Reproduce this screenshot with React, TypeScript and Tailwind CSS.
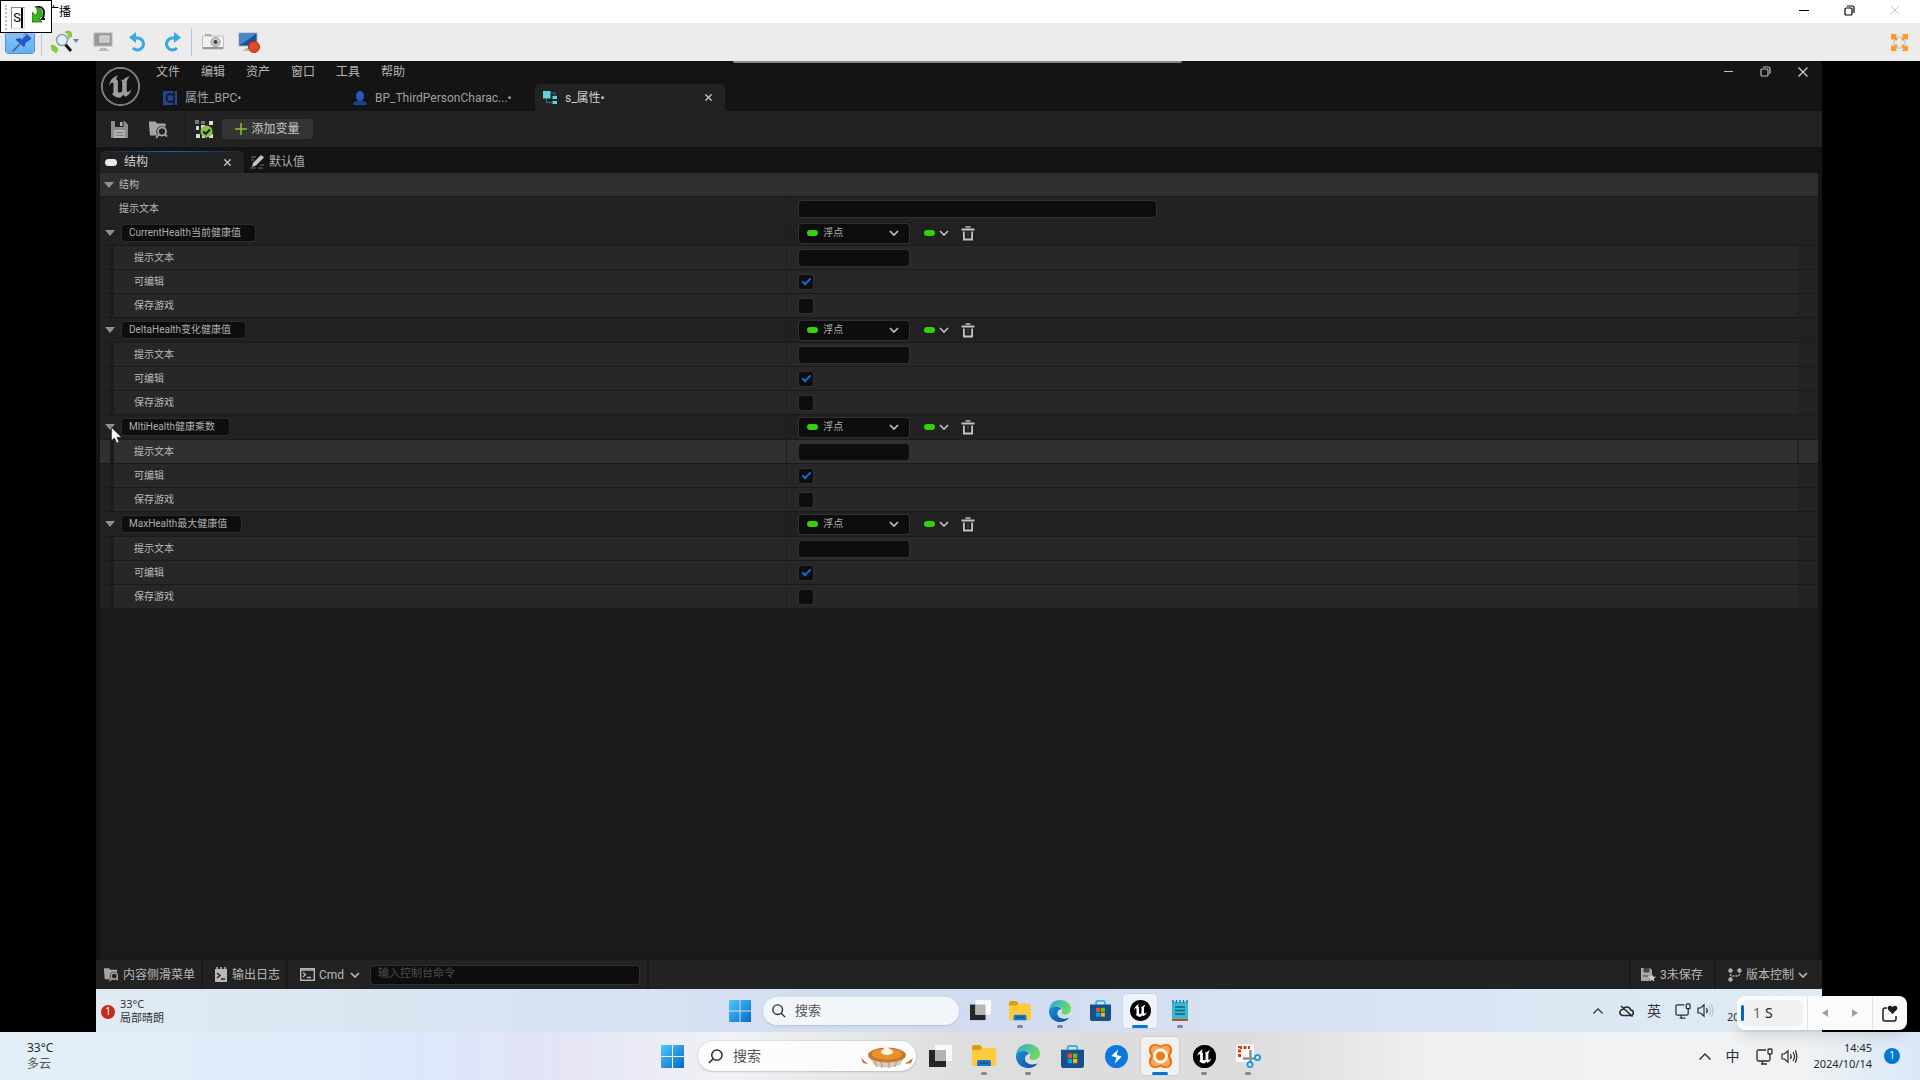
import React, { useState } from 'react';
import { SiUnrealengine } from 'react-icons/si';

interface StructMember {
  id: string;
  name: string;
  tooltip: string;
  editable: boolean;
  saveGame: boolean;
}

const initialMembers: StructMember[] = [
  { id: 'current', name: 'CurrentHealth当前健康值', tooltip: '', editable: true, saveGame: false },
  { id: 'delta', name: 'DeltaHealth变化健康值', tooltip: '', editable: true, saveGame: false },
  { id: 'mlti', name: 'MltiHealth健康乘数', tooltip: '', editable: true, saveGame: false },
  { id: 'max', name: 'MaxHealth最大健康值', tooltip: '', editable: true, saveGame: false },
];

const menus = ['文件', '编辑', '资产', '窗口', '工具', '帮助'];

/* ---------- small icons ---------- */

const Chevron = ({ className = '' }: { className?: string }) => (
  <svg className={className} width="10" height="6" viewBox="0 0 10 6" fill="none" stroke="currentColor" strokeWidth="1.7">
    <path d="M1 1l4 4 4-4" />
  </svg>
);

const Triangle = () => (
  <svg width="10" height="6" viewBox="0 0 10 6" fill="#8f8f8f">
    <path d="M0 0h10L5 6z" />
  </svg>
);

const Pill = () => <span className="block h-[6px] w-[11px] rounded-full bg-[#36d00c]" />;

const Cross = ({ size = 7, color = '#c0c0c0', width = 1.4 }: { size?: number; color?: string; width?: number }) => (
  <svg width={size} height={size} viewBox="0 0 10 10" stroke={color} strokeWidth={(width * 10) / size}>
    <path d="M.5.5l9 9M9.5.5l-9 9" />
  </svg>
);

const Restore = ({ color }: { color: string }) => (
  <svg width="11" height="11" viewBox="0 0 11 11" fill="none" stroke={color} strokeWidth="1.2">
    <rect x="1" y="3" width="7" height="7" rx="1" />
    <path d="M3 1h5.500q1.500 0 1.500 1.500V8" />
  </svg>
);

const TrashIcon = () => (
  <svg width="14" height="15" viewBox="0 0 14 15" fill="none" stroke="#c4c4c4" strokeWidth="1.8">
    <path d="M.5 3.500h13M2.900 5.500v8h8.200v-8" />
    <path d="M4.500 1h5" strokeWidth="1.400" />
    <path d="M7 5.500v5" stroke="#555" strokeWidth="1" />
  </svg>
);

const FolderSearch = ({ size }: { size: number }) => (
  <svg width={size} height={size} viewBox="0 0 19 19">
    <path d="M0 3V1.500h6.500l1.500 2h8.500V7.500A5 5 0 0 0 9 15.500H1L0 5z" fill="#a5a5a5" />
    <circle cx="13" cy="11.500" r="4" fill="#222" stroke="#a5a5a5" strokeWidth="1.800" />
    <path d="M10.300 14.300L7 17.800M16 14.500l2 2" stroke="#a5a5a5" strokeWidth="1.800" />
  </svg>
);

const SaveIcon = () => (
  <svg width="17" height="17" viewBox="0 0 17 17">
    <path d="M0 0h13.500L17 3.500V17H0z" fill="#8d8d8d" />
    <rect x="4" y="0" width="8.500" height="6" fill="#222" />
    <rect x="9" y="1" width="2.500" height="4" fill="#b0b0b0" />
    <rect x="3" y="9" width="11" height="8" fill="#b5b5b5" />
    <path d="M4.500 11.500h8M4.500 14.200h8" stroke="#777" />
  </svg>
);

const CompileIcon = () => (
  <svg width="20" height="19" viewBox="0 0 20 19">
    <g fill="#d8d8d8">
      <rect x="0" y="0" width="4" height="4" fill="#777" />
      <rect x="6" y="1" width="4" height="3" fill="#777" />
      <rect x="14" y="1" width="4" height="4" />
      <rect x="1" y="6" width="3" height="4" />
      <rect x="6" y="5" width="4" height="4" />
      <rect x="1" y="14" width="4" height="4" />
      <rect x="7" y="15" width="3" height="3" />
      <rect x="14" y="14" width="4" height="4" />
    </g>
    <circle cx="11.500" cy="11.500" r="6" fill="#86c440" />
    <path d="M8.300 11.500l2.500 2.500 4.200-4.500" fill="none" stroke="#161616" strokeWidth="1.900" />
  </svg>
);

/* ---------- remote viewer toolbar ---------- */

const PinIcon = () => (
  <svg width="28" height="21" viewBox="0 0 28 21">
    <path d="M7 19l7-7" stroke="#555c68" strokeWidth="1.600" />
    <path d="M10 7.500l8 7 1-4 6-4-5.500-5-4 5z" fill="#1c5fd4" stroke="#164aa8" />
    <path d="M15 7l5-5" stroke="#8fc0f6" strokeWidth="1.500" />
  </svg>
);

const ZoomIcon = () => (
  <svg width="28" height="24" viewBox="0 0 28 24">
    <path d="M14 14l6 7" stroke="#161616" strokeWidth="3" />
    <circle cx="11" cy="10" r="5.500" fill="#dff0ff" stroke="#8a9cb8" strokeWidth="1.500" />
    <path d="M14 2q3-2 6 0l1 5-2-1-1 3-1-5zM0 15l4 1 3 3-2 4-4-3z" fill="#7fd138" stroke="#58a81e" strokeWidth=".5" />
    <path d="M22 9h6l-3 4z" fill="#6a7dc0" />
  </svg>
);

const ScreenIcon = ({ recording }: { recording?: boolean }) => (
  <svg width="22" height="21" viewBox="0 0 22 21">
    <rect x="1" y="1" width="18" height="13" fill={recording ? '#1d4e96' : '#999'} stroke={recording ? '#a8b4c4' : '#b5b5b5'} />
    {recording ? <path d="M2 2h16L4 12H2z" fill="#4587cc" /> : <rect x="7" y="4" width="9" height="6" fill="#c8c8c8" stroke="#e4e4e4" />}
    <path d="M7 16h7v2H7zM5 18h11v1H5z" fill="#bcbcbc" />
    {recording && <circle cx="16" cy="15" r="5.500" fill="#e04a20" stroke="#b5300f" />}
  </svg>
);

const TurnIcon = ({ right }: { right?: boolean }) => (
  <svg className={right ? '-scale-x-100' : ''} width="18" height="20" viewBox="0 0 18 20" fill="none">
    <path d="M5 6h4a6 6 0 1 1-5 10" stroke="#38a9e2" strokeWidth="3" />
    <path d="M0 5.500L7 0v11z" fill="#38a9e2" />
  </svg>
);

const CameraIcon = () => (
  <svg width="22" height="16" viewBox="0 0 22 16">
    <rect x=".5" y="2" width="21" height="13" rx="1" fill="#f1f1f1" stroke="#bfbfbf" />
    <path d="M1 13h20v2H1z" fill="#999" />
    <rect x="3" y="0" width="6" height="2" fill="#aaa" />
    <circle cx="13.500" cy="8" r="4.500" fill="#c9c9c9" stroke="#999" />
    <circle cx="13.500" cy="8" r="2" fill="#3d4454" />
  </svg>
);

const ExpandIcon = () => (
  <svg width="17" height="17" viewBox="0 0 17 17">
    <rect x="3" y="3" width="11" height="11" fill="none" stroke="#a9d5ee" strokeWidth="1.500" />
    <path d="M0 0h6L4.500 2.500 7 5 5 7 2.500 4.500 0 6zM17 0v6l-2.500-1.500L12 7l-2-2 2.500-2.500L11 0zM0 17v-6l2.500 1.500L5 10l2 2-2.500 2.500L6 17zM17 17h-6l1.500-2.500L10 12l2-2 2.500 2.500L17 11z" fill="#ff9a1a" />
  </svg>
);

/* ---------- taskbar icons ---------- */

const WindowsLogo = ({ size }: { size: number }) => (
  <svg width={size} height={size} viewBox="0 0 23 23">
    <defs>
      <linearGradient id="win" x1="0" y1="0" x2="1" y2="1">
        <stop offset="0" stopColor="#4fc9fb" />
        <stop offset="1" stopColor="#0668c8" />
      </linearGradient>
    </defs>
    <path d="M0 0h11v11H0zM12 0h11v11H12zM0 12h11v11H0zM12 12h11v11H12z" fill="url(#win)" />
  </svg>
);

const SearchGlass = ({ flip, size }: { flip?: boolean; size: number }) => (
  <svg className={flip ? 'shrink-0 -scale-x-100' : 'shrink-0'} width={size} height={size} viewBox="0 0 16 16" fill="none" stroke="#2a2a2a" strokeWidth="1.600">
    <circle cx="6.500" cy="6.500" r="5.500" />
    <path d="M10.500 10.500l4.500 4.500" />
  </svg>
);

const TaskView = ({ size }: { size: number }) => (
  <svg width={size} height={size} viewBox="0 0 23 23">
    <rect x="0" y="5" width="17" height="17" fill="#262626" />
    <rect x="6" y="0" width="17" height="16" fill="#fafafa" />
    <rect x="6" y="5" width="11" height="11" fill="#b4b4b4" />
  </svg>
);

const Explorer = ({ size }: { size: number }) => (
  <svg width={size} height={size} viewBox="0 0 24 24">
    <path d="M0 3q0-2 2-2h6l2.500 3H20v5H0z" fill="#dc9c0c" />
    <path d="M0 7q0-1 1-1h7l2-2h13q1 0 1 1v16q0 1-1 1H1q-1 0-1-1z" fill="#fdcb3e" />
    <path d="M5 22v-4q0-2 2-2h10q2 0 2 2v4z" fill="#1b74c4" />
    <path d="M8 19h8" stroke="#0f4f94" strokeWidth="1.500" />
  </svg>
);

const Edge = ({ size }: { size: number }) => (
  <svg width={size} height={size} viewBox="0 0 24 24">
    <defs>
      <linearGradient id="edgeTop" x1="0" y1="0" x2="1" y2=".5">
        <stop offset="0" stopColor="#2aa6e6" />
        <stop offset="1" stopColor="#6edc5a" />
      </linearGradient>
      <linearGradient id="edgeLow" x1="0" y1="0" x2="1" y2="1">
        <stop offset="0" stopColor="#1c8fe0" />
        <stop offset="1" stopColor="#0c4a94" />
      </linearGradient>
    </defs>
    <path d="M0 12C0 5 5 0 12 0s12 4.500 12 9.500c0 4-3 6.500-6.500 6.500-3 0-4-1.200-4-2 0-.8 1-1.200 1-3C14.500 8.500 12 7 9 7 4 7 0 10 0 12z" fill="url(#edgeTop)" />
    <path d="M0 12c0-2.500 3.500-5 8-5 3 0 5 1.500 5.500 3C11 10 9 12 9 14.500c0 4 4 6 7.500 6 2.500 0 4.500-1 5.500-1.500C20 22 16.500 24 12 24 5 24 0 19 0 12z" fill="url(#edgeLow)" />
  </svg>
);

const Store = ({ size }: { size: number }) => (
  <svg width={size} height={size} viewBox="0 0 24 24">
    <path d="M7 6V3q0-2 2-2h6q2 0 2 2v3" fill="none" stroke="#36b2ee" strokeWidth="2" />
    <path d="M0 5h24v16q0 3-3 3H3q-3 0-3-3z" fill="#174f8c" />
    <path d="M7 9h4.500v4.500H7z" fill="#f25022" />
    <path d="M12.500 9H17v4.500h-4.500z" fill="#7fba00" />
    <path d="M7 14.500h4.500V19H7z" fill="#00a4ef" />
    <path d="M12.500 14.500H17V19h-4.500z" fill="#ffb900" />
  </svg>
);

const Thunder = () => (
  <svg width="23" height="23" viewBox="0 0 24 24">
    <circle cx="12" cy="12" r="12" fill="#0a78dc" />
    <path d="M14 4.500L6.500 11.500l5.500 1.500-2 6.500 7.500-7.500-5.500-1.500z" fill="#fff" />
  </svg>
);

const Unreal = ({ size }: { size: number }) => (
  <span className="relative flex rounded-full bg-black after:absolute after:inset-0 after:rounded-full after:border-2 after:border-black after:content-['']">
    <SiUnrealengine size={size} color="#fff" />
  </span>
);

const Notepad = () => (
  <svg width="18" height="22" viewBox="0 0 18 22">
    <rect x="1" y="2" width="16" height="17" fill="#38b8d4" />
    <path d="M2 0v3M5.500 0v3M9 0v3M12.500 0v3M16 0v3" stroke="#1b7b94" strokeWidth="1.500" />
    <path d="M4 7h10M4 10.500h10M4 14h10" stroke="#155f78" strokeWidth="1.500" />
    <path d="M1 19h16v2H1z" fill="#c0531a" />
  </svg>
);

const OrangeApp = () => (
  <svg width="25" height="24" viewBox="0 0 25 24">
    <path d="M7 0q3 0 5.500 1.500Q15 0 18 0q6 .5 6 6 0 3.500-2 6 2 2.500 2 6 0 5.500-6 6-3 0-5.500-1.500Q10 24 7 24q-6-.5-6-6 0-3.500 2-6-2-2.500-2-6 0-5.500 6-6z" fill="#ea6c0c" />
    <path d="M7 1.500q3 0 5.500 2 2.500-2 5.500-2 4.500.5 4 5-.5 3-2.500 5.500 2 2.500 2.500 5.500.5 4.500-4 5-3 0-5.500-2-2.500 2-5.500 2-4.500-.5-4-5Q3.500 14.500 5.500 12 3.500 9.500 3 6.500q-.5-4.500 4-5z" fill="#ffa552" />
    <circle cx="12.500" cy="12" r="6" fill="#f07a18" stroke="#fff" strokeWidth="2.800" />
  </svg>
);

const Snip = () => (
  <svg width="25" height="24" viewBox="0 0 25 24">
    <rect x="0" y="0" width="18" height="18" rx="2" fill="#fafafa" />
    <path d="M3.500 13V3.500H14" fill="none" stroke="#d63c12" strokeWidth="3" strokeDasharray="3 1.500" />
    <path d="M14.500 6v12M7 14.500h12" stroke="#8b8f96" strokeWidth="2.500" />
    <circle cx="14" cy="20.500" r="2.500" fill="#fff" stroke="#1e9ce0" strokeWidth="2" />
    <circle cx="21.500" cy="13.500" r="2.500" fill="#fff" stroke="#1e9ce0" strokeWidth="2" />
  </svg>
);

const Pie = () => (
  <svg className="shrink-0" width="52" height="26" viewBox="0 0 52 26">
    <path d="M0 15l7 6-5-1zM52 15l-8 6 6-1z" fill="#d4602a" />
    <path d="M8 13h36l-5 9q-13 5-26 0z" fill="#d9cdb8" />
    <path d="M13 16l3 8M20 17l1 8M28 17v8M36 16l-2 8" stroke="#aa9c84" strokeWidth="1" />
    <ellipse cx="26" cy="12" rx="19" ry="7.500" fill="#c67a2c" />
    <ellipse cx="26" cy="11" rx="15" ry="5.500" fill="#e8922e" />
    <path d="M20 10q0-3 3-4 0-4 3-6 0 4 3 6 3 1 3 4-6 4-12 0z" fill="#fdf3e2" />
  </svg>
);

const Network = ({ size }: { size: number }) => (
  <svg width={size} height={size} viewBox="0 0 17 17" fill="none" stroke="#2a2a2a" strokeWidth="1.300">
    <path d="M10 2H2.500Q1 2 1 3.500v8Q1 13 2.500 13h10q1.500 0 1.500-1.500V9M5 16h6M6.500 13v3M14 6v3" />
    <rect x="12" y="1" width="4" height="5" rx="1" />
  </svg>
);

const Speaker = ({ faint }: { faint?: boolean }) => (
  <svg width="17" height="15" viewBox="0 0 17 15" fill="none" stroke="#2a2a2a" strokeWidth="1.200">
    <path d="M1 5h2.500L7 1.800v11.400L3.500 10H1z" />
    <path d="M9.500 5q1.500 2.500 0 5" />
    <path d="M12 3q3 4.500 0 9M14.300 1.300q3 6.200 0 12.400" opacity={faint ? 0.2 : 1} />
  </svg>
);

const CaretUp = ({ size }: { size: number }) => (
  <svg width={size} height={size / 2 + 1} viewBox="0 0 12 7" fill="none" stroke="#2a2a2a" strokeWidth="1.400">
    <path d="M.5 6.500L6 1l5.500 5.500" />
  </svg>
);

/* ---------- struct editor rows ---------- */

const checkboxClass =
  "relative block size-[14px] appearance-none rounded-[2px] bg-[#0d0d0d] ring-1 ring-[#303030] checked:after:absolute checked:after:left-[5px] checked:after:top-[1px] checked:after:h-[9px] checked:after:w-[5px] checked:after:rotate-45 checked:after:border-b-2 checked:after:border-r-2 checked:after:border-[#0d6fd8] checked:after:content-['']";

const textboxClass = 'block h-4 rounded-[3px] bg-[#0d0d0d] px-2 text-[10px] text-[#c0c0c0] ring-1 ring-[#303030] outline-none';

const DetailRow = ({ id, label, hovered, children }: { id: string; label: string; hovered?: boolean; children: React.ReactNode }) => (
  <div className={`flex h-6 border-b border-[#1a1a1a] ${hovered ? 'bg-[#303030]' : 'bg-[#222222]'}`}>
    <div className="flex w-2/5 border-r border-[#202020]">
      <div className="ml-[10px] w-1 bg-[#1c1c1c]" />
      <label htmlFor={id} className={`flex flex-1 items-center pl-5 ${hovered ? 'bg-[#303030]' : 'bg-[#272727]'}`}>
        {label}
      </label>
    </div>
    <div className={`flex flex-1 items-center pl-3 ${hovered ? 'bg-[#303030]' : 'bg-[#272727]'}`}>{children}</div>
    <div className={`w-[21px] ${hovered ? 'border-l-2 border-[#242424]' : ''}`} />
  </div>
);

interface MemberProps {
  member: StructMember;
  hovered?: boolean;
  onChange: (patch: Partial<StructMember>) => void;
}

const MemberGroup: React.FC<MemberProps> = ({ member, hovered, onChange }) => (
  <section>
    <div className="flex h-[25px] border-b border-[#1a1a1a] bg-[#212121]">
      <div className="flex w-2/5 items-center gap-[7px] border-r border-[#1d1d1d] pl-[5px]">
        <button aria-label="展开" className="relative">
          <Triangle />
          {hovered && (
            <svg className="absolute left-[6px] top-[3px] z-10" width="12" height="17" viewBox="0 0 12 17">
              <path d="M.5.5v13l3-2.500 2.300 5 2.200-1-2.200-4.700h4.700z" fill="#fff" stroke="#222" strokeWidth=".6" />
            </svg>
          )}
        </button>
        <input
          aria-label="名称"
          value={member.name}
          onChange={(e) => onChange({ name: e.target.value })}
          className="field-sizing-content h-4 rounded-[3px] bg-[#0d0d0d] pb-[3px] pl-[7px] pr-[14px] text-[10px] text-[#adadad] ring-1 ring-[#2b2b2b] outline-none"
        />
      </div>
      <div className="flex flex-1 items-center pl-3">
        <div className="relative flex items-center">
          <select aria-label="类型" className="h-[19px] w-[110px] appearance-none rounded-[3px] bg-[#0d0d0d] pb-px pl-6 text-[10px] text-[#adadad] ring-1 ring-[#303030] outline-none">
            <option>浮点</option>
          </select>
          <span className="pointer-events-none absolute left-2">
            <Pill />
          </span>
          <Chevron className="pointer-events-none absolute right-[10px] text-[#c0c0c0]" />
        </div>
        <button aria-label="容器类型" className="ml-[15px] flex items-center gap-1 text-[#c0c0c0]">
          <Pill />
          <Chevron />
        </button>
        <button aria-label="删除" className="ml-3">
          <TrashIcon />
        </button>
      </div>
    </div>
    <DetailRow id={`${member.id}-tip`} label="提示文本" hovered={hovered}>
      <input id={`${member.id}-tip`} value={member.tooltip} onChange={(e) => onChange({ tooltip: e.target.value })} className={`${textboxClass} w-[110px]`} />
    </DetailRow>
    <DetailRow id={`${member.id}-edit`} label="可编辑">
      <input id={`${member.id}-edit`} type="checkbox" checked={member.editable} onChange={(e) => onChange({ editable: e.target.checked })} className={checkboxClass} />
    </DetailRow>
    <DetailRow id={`${member.id}-save`} label="保存游戏">
      <input id={`${member.id}-save`} type="checkbox" checked={member.saveGame} onChange={(e) => onChange({ saveGame: e.target.checked })} className={checkboxClass} />
    </DetailRow>
  </section>
);

/* ---------- taskbar cell ---------- */

interface TaskCellProps {
  label: string;
  small?: boolean;
  active?: boolean;
  running?: boolean;
  children: React.ReactNode;
}

const TaskCell: React.FC<TaskCellProps> = ({ label, small, active, running, children }) => (
  <div className={`flex justify-center ${small ? 'w-10' : 'w-11'}`}>
    <button
      aria-label={label}
      className={`relative flex items-center justify-center rounded-[4px] ${small ? 'h-[34px] w-[34px]' : 'h-[38px] w-[38px]'} ${active ? 'bg-white/60 ring-1 ring-black/5' : ''}`}
    >
      {children}
      {active && <span className="absolute bottom-0 h-[3px] w-4 rounded-full bg-[#0a74d0]" />}
      {running && <span className="absolute bottom-0 h-[3px] w-[6px] rounded-full bg-[#858585]" />}
    </button>
  </div>
);

const App: React.FC = () => {
  const [members, setMembers] = useState<StructMember[]>(initialMembers);
  const [tip, setTip] = useState('');

  const update = (id: string, patch: Partial<StructMember>) =>
    setMembers((list) => list.map((m) => (m.id === id ? { ...m, ...patch } : m)));

  return (
    <div className="relative flex min-h-screen flex-col bg-black font-['Roboto','Noto_Sans_CJK_SC',sans-serif] text-xs">
      {/* viewer title bar */}
      <header className="flex h-[23px] items-center justify-between bg-white pl-[47px] pr-5 text-black">
        <span>广播</span>
        <div className="flex items-center gap-[35px] pb-[3px]">
          <button aria-label="最小化" className="h-px w-[10px] bg-black" />
          <button aria-label="还原"><Restore color="#000" /></button>
          <button aria-label="关闭"><Cross size={10} color="#c8c8c8" width={1} /></button>
        </div>
      </header>

      {/* viewer toolbar */}
      <div className="flex h-[38px] items-center bg-[#ececec] pl-[6px] pr-3">
        <button aria-label="固定" className="rounded-[3px] bg-gradient-to-b from-[#8cc0f2] to-[#5fb2f4] ring-1 ring-[#4c98dc]"><PinIcon /></button>
        <div className="mx-[7px] h-7 w-px bg-[#b8c4e6]" />
        <button aria-label="缩放" className="ml-[2px]"><ZoomIcon /></button>
        <button aria-label="屏幕" className="ml-[14px]"><ScreenIcon /></button>
        <button aria-label="撤销" className="ml-[14px]"><TurnIcon /></button>
        <button aria-label="重做" className="ml-4"><TurnIcon right /></button>
        <div className="mx-[10px] h-7 w-px bg-[#b8c4e6]" />
        <button aria-label="截图"><CameraIcon /></button>
        <button aria-label="录制" className="ml-[14px]"><ScreenIcon recording /></button>
        <button aria-label="全屏" className="ml-auto"><ExpandIcon /></button>
      </div>

      {/* remote desktop */}
      <main className="relative mr-[98px] ml-24 flex flex-1 flex-col bg-[#141414] text-[#b4b4b4]">
        <div className="absolute left-[637px] top-0 h-[2px] w-[449px] rounded-b bg-[#8c8c8c]" />

        <div className="flex h-[50px]">
          <div className="flex w-[58px] items-center pl-[6px]">
            <span className="rounded-full ring-1 ring-[#8a8a8a]">
              <SiUnrealengine size={37} color="#9d9d9d" />
            </span>
          </div>
          <div className="flex flex-1 flex-col">
            <nav className="flex h-[23px] items-center gap-[21px] pb-[2px] pl-[2px]">
              {menus.map((m) => (
                <button key={m}>{m}</button>
              ))}
              <div className="ml-auto flex items-center gap-[27px] pr-[14px]">
                <button aria-label="最小化" className="h-px w-[9px] bg-[#c0c0c0]" />
                <button aria-label="还原"><Restore color="#b8b8b8" /></button>
                <button aria-label="关闭"><Cross size={10} color="#c8c8c8" width={1.4} /></button>
              </div>
            </nav>
            <div className="flex h-[27px] pl-px">
              <button className="flex w-[190px] items-center gap-2 pl-2 text-[#a0a0a0]">
                <svg width="14" height="14" viewBox="0 0 14 14">
                  <path d="M0 0h14v14H0z" fill="#23468c" />
                  <path d="M10.500 4.500Q9 3 7 3 3.500 3.500 3.500 7T7 11q2 0 3.500-1.500M11 0v14" fill="none" stroke="#131a2b" strokeWidth="1.800" />
                </svg>
                属性_BPC•
              </button>
              <button className="flex w-[190px] items-center gap-2 pl-2 text-[#a0a0a0]">
                <svg width="14" height="14" viewBox="0 0 14 14">
                  <path d="M0 14q0-4 5-4.500h4q5 .5 5 4.500z" fill="#1d418c" />
                  <ellipse cx="7" cy="5" rx="4" ry="5" fill="#2a58bc" />
                </svg>
                <span>BP_ThirdPersonCharac...•</span>
              </button>
              <div className="flex w-[190px] items-center rounded-t-[5px] bg-[#222222] pl-2 pr-[13px] text-[#d0d0d0]">
                <svg className="mr-2" width="14" height="13" viewBox="0 0 14 13">
                  <rect width="7.500" height="7.500" fill="#5fd3e0" />
                  <rect x="9.500" y="5" width="4.500" height="3" fill="#5fd3e0" />
                  <rect x="9.500" y="10" width="4.500" height="3" fill="#5fd3e0" />
                  <path d="M3.500 8v3.500h6M8 2h4v3" fill="none" stroke="#2f7d88" />
                </svg>
                <span>s_属性•</span>
                <button aria-label="关闭" className="ml-auto"><Cross /></button>
              </div>
            </div>
          </div>
        </div>

        {/* asset toolbar */}
        <div className="flex h-9 items-center bg-[#222222] pl-[15px]">
          <button aria-label="保存"><SaveIcon /></button>
          <button aria-label="浏览" className="ml-[21px]"><FolderSearch size={19} /></button>
          <div className="ml-4 h-full w-px bg-[#1c1c1c]" />
          <button aria-label="编译" className="ml-[10px]"><CompileIcon /></button>
          <button className="ml-[7px] flex h-5 w-[91px] items-center justify-center gap-1 rounded-[3px] bg-[#343434] text-[#c8c8c8]">
            <svg width="12" height="12" viewBox="0 0 12 12" stroke="#84c03c" strokeWidth="1.500">
              <path d="M6 0v12M0 6h12" />
            </svg>
            添加变量
          </button>
        </div>

        {/* panel tabs */}
        <div className="flex h-[26px] items-end pl-1">
          <div className="relative flex h-[22px] w-36 items-center overflow-hidden rounded-t-[5px] bg-[#222222] pl-[5px] pr-[13px] text-[#cfcfcf]">
            <div className="absolute inset-x-0 top-0 h-px bg-gradient-to-r from-transparent via-[#1266c8] to-transparent" />
            <span className="mr-[7px] h-[7px] w-3 rounded-full bg-[#e8e8e8]" />
            结构
            <button aria-label="关闭" className="ml-auto"><Cross /></button>
          </div>
          <button className="flex h-[22px] items-center gap-[5px] pl-[6px] text-[#adadad]">
            <svg width="14" height="14" viewBox="0 0 14 14">
              <path d="M2 12l1-4 8-8 3 2.500-8 8z" fill="#c4c4c4" />
              <path d="M1 2h5M1 5h3M0 13h6M8 13h5M10 10h4" stroke="#6e6e6e" />
            </svg>
            默认值
          </button>
        </div>

        {/* struct details */}
        <div className="mx-1 flex flex-1 flex-col bg-[#1a1a1a] text-[10px] text-[#bababa]">
          <div className="flex h-6 items-center gap-[5px] border-b border-[#1a1a1a] bg-[#2f2f2f] pl-1">
            <button aria-label="折叠"><Triangle /></button>
            结构
          </div>
          <div className="flex h-6 bg-[#222222]">
            <label htmlFor="struct-tip" className="flex w-2/5 items-center border-r border-[#1d1d1d] pl-[19px]">提示文本</label>
            <div className="flex flex-1 items-center pl-3">
              <input id="struct-tip" value={tip} onChange={(e) => setTip(e.target.value)} className={`${textboxClass} w-[357px]`} />
            </div>
          </div>
          {members.map((m) => (
            <MemberGroup key={m.id} member={m} hovered={m.id === 'mlti'} onChange={(patch) => update(m.id, patch)} />
          ))}
        </div>

        {/* status bar */}
        <footer className="flex h-[30px] items-stretch border-t border-[#151515] bg-[#222222] text-[#b8b8b8]">
          <button className="flex w-[107px] items-center gap-1 border-r-2 border-[#1a1a1a] pl-2">
            <FolderSearch size={15} />
            内容侧滑菜单
          </button>
          <button className="flex w-[85px] items-center gap-[5px] border-r-2 border-[#1a1a1a] pl-3">
            <svg width="12" height="15" viewBox="0 0 12 15">
              <path d="M0 2h12v13H0z" fill="#b8b8b8" />
              <path d="M2 0v3M6 0v3M10 0v3" stroke="#b8b8b8" strokeWidth="1.500" />
              <path d="M2 6l3 2.500L2 11M6 12h4" fill="none" stroke="#222" strokeWidth="1.400" />
            </svg>
            输出日志
          </button>
          <div className="flex flex-1 items-center pl-3">
            <button className="flex items-center gap-1">
              <svg width="15" height="13" viewBox="0 0 15 13" fill="none" stroke="#b8b8b8" strokeWidth="1.400">
                <rect x=".7" y=".7" width="13.600" height="11.600" />
                <path d="M1 2h13M3 4.500l2.500 2L3 9M7 9.500h4" />
              </svg>
              Cmd
              <Chevron className="ml-[2px]" />
            </button>
            <input aria-label="输入控制台命令" placeholder="输入控制台命令" className="ml-[11px] h-[18px] w-[268px] rounded-[3px] bg-[#0d0d0d] px-[7px] pb-[2px] text-[11px] ring-1 ring-[#303030] outline-none placeholder:text-[#4e4e4e]" />
            <div className="ml-2 h-full w-[2px] bg-[#1a1a1a]" />
          </div>
          <button className="flex w-[85px] items-center gap-1 border-l-2 border-[#1a1a1a] pl-[10px]">
            <svg width="15" height="14" viewBox="0 0 15 14">
              <path d="M0 0h9l2 2v4l-3 7H0z" fill="#a8a8a8" />
              <path d="M3 0h5v4H3zM2 8h5" fill="#444" stroke="#444" />
              <path d="M11 6l1.100 2.600 2.900.2-2.200 1.900.7 2.800-2.500-1.500L8.500 13.500l.7-2.800L7 8.800l2.900-.2z" fill="#d0d0d0" />
            </svg>
            3未保存
          </button>
          <button className="flex w-[108px] items-center gap-1 border-l-2 border-[#1a1a1a] pl-3">
            <svg width="14" height="14" viewBox="0 0 14 14" fill="#b0b0b0" stroke="#b0b0b0">
              <circle cx="2.500" cy="2.500" r="1.800" />
              <circle cx="2.500" cy="11.500" r="1.800" />
              <circle cx="11.500" cy="2.500" r="1.800" />
              <path d="M2.500 3v8M11.500 3v3q0 2-3 2H3" fill="none" strokeDasharray="2 1" strokeWidth="1.300" />
            </svg>
            版本控制
            <Chevron />
          </button>
        </footer>

        {/* taskbar of the remote machine */}
        <div className="grid h-[43px] grid-cols-[1fr_auto_1fr] items-center bg-gradient-to-r from-[#dfeaf3] via-[#d2dcf1] to-[#dfecf4] font-['Noto_Sans','Noto_Sans_CJK_SC',sans-serif] text-[#333]">
          <div className="flex items-center gap-[5px] pl-[5px]">
            <span className="mt-[3px] flex size-[14px] items-center justify-center rounded-full bg-[#c42b1c] text-[10px] text-white">1</span>
            <div className="flex flex-col text-[11px] leading-[14px]">
              <span>33°C</span>
              <span>局部晴朗</span>
            </div>
          </div>
          <div className="flex items-center pl-[2px]">
            <TaskCell label="开始" small><WindowsLogo size={22} /></TaskCell>
            <label className="mr-px ml-[3px] flex h-7 w-[196px] items-center gap-[9px] rounded-full bg-[#f2f6fb] pl-[9px] shadow-sm">
              <SearchGlass size={14} />
              <input aria-label="搜索" placeholder="搜索" className="w-full min-w-0 bg-transparent text-[13px] outline-none placeholder:text-[#555]" />
            </label>
            <TaskCell label="任务视图" small><TaskView size={21} /></TaskCell>
            <TaskCell label="文件资源管理器" small running><Explorer size={22} /></TaskCell>
            <TaskCell label="Edge" small running><Edge size={22} /></TaskCell>
            <TaskCell label="应用商店" small><Store size={21} /></TaskCell>
            <TaskCell label="虚幻引擎" small active><Unreal size={21} /></TaskCell>
            <TaskCell label="记事本" small running><Notepad /></TaskCell>
          </div>
          <div className="flex items-center justify-end pr-[79px]">
            <CaretUp size={10} />
            <svg className="ml-4" width="15" height="12" viewBox="0 0 15 12" fill="none" stroke="#2a2a2a" strokeWidth="1.600">
              <path d="M4 10.500h7.500a2.700 2.700 0 0 0 .3-5.400A4.300 4.300 0 0 0 3.800 4.500a3 3 0 0 0 .2 6zM2 1l11.500 10.500" />
            </svg>
            <span className="ml-[13px] text-sm">英</span>
            <span className="ml-[14px]"><Network size={16} /></span>
            <span className="ml-[6px]"><Speaker faint /></span>
            <span className="ml-[13px] mt-[13px] w-4 text-[11px]">20</span>
          </div>
        </div>
      </main>

      {/* taskbar of the host */}
      <footer className="grid h-12 grid-cols-[1fr_auto_1fr] items-center bg-[linear-gradient(90deg,#e2eff8_0%,#e0ecfa_15%,#dde7fb_22%,#e4e4f6_29%,#f0f2f5_38%,#dedede_50%,#dcdcdc_65%,#f1f1f1_75%,#f0f2f4_94%,#d9e8f8_100%)] font-['Noto_Sans','Noto_Sans_CJK_SC',sans-serif] text-[#2a2a2a]">
        <div className="flex flex-col pl-[27px] leading-4">
          <span>33°C</span>
          <span className="text-[#555]">多云</span>
        </div>
        <div className="flex items-center">
          <TaskCell label="开始"><WindowsLogo size={23} /></TaskCell>
          <label className="mr-[2px] ml-1 flex h-[30px] w-[218px] items-center gap-[10px] rounded-full bg-[#fcfcfd] pl-[10px] pr-[3px] shadow-sm ring-1 ring-black/5">
            <SearchGlass flip size={15} />
            <input aria-label="搜索" placeholder="搜索" className="w-full min-w-0 bg-transparent text-sm outline-none placeholder:text-[#555]" />
            <Pie />
          </label>
          <TaskCell label="任务视图"><TaskView size={23} /></TaskCell>
          <TaskCell label="文件资源管理器" running><Explorer size={24} /></TaskCell>
          <TaskCell label="Edge" running><Edge size={24} /></TaskCell>
          <TaskCell label="应用商店"><Store size={23} /></TaskCell>
          <TaskCell label="迅雷"><Thunder /></TaskCell>
          <TaskCell label="广播" active><OrangeApp /></TaskCell>
          <TaskCell label="虚幻引擎" running><Unreal size={23} /></TaskCell>
          <TaskCell label="截图工具" running><Snip /></TaskCell>
        </div>
        <div className="flex items-center justify-end pr-5">
          <CaretUp size={12} />
          <span className="ml-[14px] text-sm">中</span>
          <span className="ml-[17px]"><Network size={17} /></span>
          <span className="ml-2"><Speaker /></span>
          <div className="ml-[15px] flex flex-col text-right text-[11px] leading-4">
            <span>14:45</span>
            <span>2024/10/14</span>
          </div>
          <span className="ml-3 flex size-4 items-center justify-center rounded-full bg-[#0078d4] text-[10px] text-white">1</span>
        </div>
      </footer>

      {/* floating input bar over both taskbars */}
      <div className="absolute right-[13px] bottom-[50px] flex h-[34px] w-[170px] items-center rounded-lg bg-[#fbfbfb] pl-1 font-['Noto_Sans','Noto_Sans_CJK_SC',sans-serif] shadow-lg">
        <div className="flex h-[26px] w-[62px] items-center rounded-md bg-[#f0f0f0] text-sm text-[#222]">
          <span className="mr-[9px] h-4 w-[3px] rounded-full bg-[#0067c0]" />
          <span className="mr-1 text-[#666]">1</span>
          <span>S</span>
        </div>
        <div className="ml-1 flex h-full w-[66px] items-center justify-center gap-6 border-x border-[#e2e2e2]">
          <button aria-label="上一页">
            <svg width="6" height="8" viewBox="0 0 6 8" fill="#a2a2a2"><path d="M6 0v8L0 4z" /></svg>
          </button>
          <button aria-label="下一页">
            <svg width="6" height="8" viewBox="0 0 6 8" fill="#a2a2a2"><path d="M0 0v8l6-4z" /></svg>
          </button>
        </div>
        <button aria-label="表情" className="flex flex-1 justify-center">
          <svg width="16" height="17" viewBox="0 0 16 17">
            <path d="M5 3H3Q1 3 1 5v9q0 2 2 2h9q2 0 2-2v-3" fill="none" stroke="#1c1c1c" strokeWidth="1.500" />
            <path d="M10.500 9L6 4.500Q5 2 7 1q2-.6 3.500 1.200Q12 .4 14 1q2 1 1 3.500z" fill="#1c1c1c" />
          </svg>
        </button>
      </div>

      {/* input method box at the caret */}
      <div className="absolute left-0 top-0 flex h-[33px] w-[52px] border border-black bg-white">
        <div className="ml-[4px] mt-1 h-[25px] border-l-2 border-dotted border-[#c0c0c0]" />
        <div className="ml-1 mt-[6px] flex h-[22px] w-[14px] justify-center border border-[#8c8c8c] border-r-[#ddd] border-b-[#ddd] text-[13px] leading-5 text-black">
          <span className="border-r-2 border-black">S</span>
        </div>
        <svg className="ml-[7px] mt-[5px]" width="14" height="17" viewBox="0 0 14 17">
          <path d="M4 1q8-1 8 6 0 4-2 6l3 0" fill="none" stroke="#111" strokeWidth="2" />
          <path d="M0 6v10h10l-3-4q4-1 3-5Q9 1 3 .5q4 4 1 9z" fill="#35b51c" stroke="#1c6a10" strokeWidth=".8" />
        </svg>
      </div>
    </div>
  );
};

export default App;
